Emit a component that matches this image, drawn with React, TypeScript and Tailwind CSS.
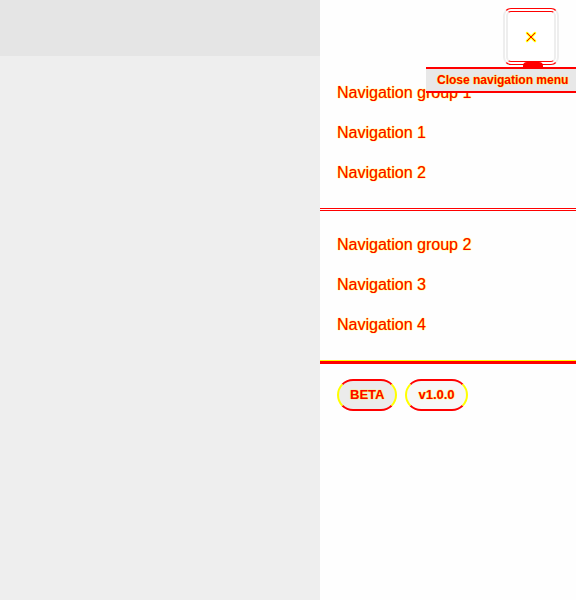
import React from "react";

const txt = "text-[#ff0000] [text-shadow:0_0_1px_#ffff00,0_0_1px_#ffff00]";

function Item({ label }: { label: string }) {
  return (
    <div className={`h-10 flex items-center pl-[17px] text-[16px] ${txt}`}>{label}</div>
  );
}

export default function App() {
  return (
    <div className="w-[576px] h-[600px] flex font-['Liberation_Sans',Arial,sans-serif] overflow-hidden">
      <div className="w-[320px] flex flex-col bg-[#eeeeee]">
        <div className="h-14 bg-[#e5e5e5]" />
      </div>
      <div className="relative w-[256px] bg-[#fefefe] flex flex-col">
        <div className="h-[73px] flex justify-end pr-[17px] pt-2">
          <button className="relative w-[56px] h-[57px] rounded-lg bg-white border-x-[5px] border-x-[#eeeeee] border-y-4 border-double border-y-[#ff0000] flex items-center justify-center">
            <svg width="12" height="12" viewBox="0 0 12 12">
              <path d="M2 2L10 10M10 2L2 10" stroke="#ffff00" strokeWidth="2.5" strokeLinecap="round" />
              <path d="M2 2L10 10M10 2L2 10" stroke="#ff0000" strokeWidth="1" />
            </svg>
          </button>
        </div>
        <div className="absolute left-[203px] top-[62px] w-[20px] h-[5px] bg-[#ff0000] rounded-t" />
        <div className="absolute left-[106px] top-[67px] w-[160px] h-[26px] bg-[#e8e8e8] border-y-2 border-[#ff0000] flex items-center pl-[11px] z-10">
          <span className={`text-[12px] font-bold whitespace-nowrap ${txt}`}>Close navigation menu</span>
        </div>
        <div className="pb-[15px]">
          <Item label="Navigation group 1" />
          <Item label="Navigation 1" />
          <Item label="Navigation 2" />
        </div>
        <div className="h-[3px] border-y border-[#ff0000]" />
        <div className="pt-[14px] pb-[15px]">
          <Item label="Navigation group 2" />
          <Item label="Navigation 3" />
          <Item label="Navigation 4" />
        </div>
        <div className="h-[4px] border-t border-[#ffff00] bg-[#ff0000]" />
        <div className="flex gap-2 pl-[17px] pt-[15px]">
          <span className={`h-8 px-[11px] rounded-full bg-[#ebebeb] border-2 border-[#ffff00] border-y-[#ff0000] flex items-center text-[13px] font-bold ${txt}`}>BETA</span>
          <span className={`h-8 px-[11px] rounded-full bg-[#f7f7f7] border-2 border-[#ffff00] border-y-[#ff0000] flex items-center text-[13px] font-bold ${txt}`}>v1.0.0</span>
        </div>
      </div>
    </div>
  );
}
